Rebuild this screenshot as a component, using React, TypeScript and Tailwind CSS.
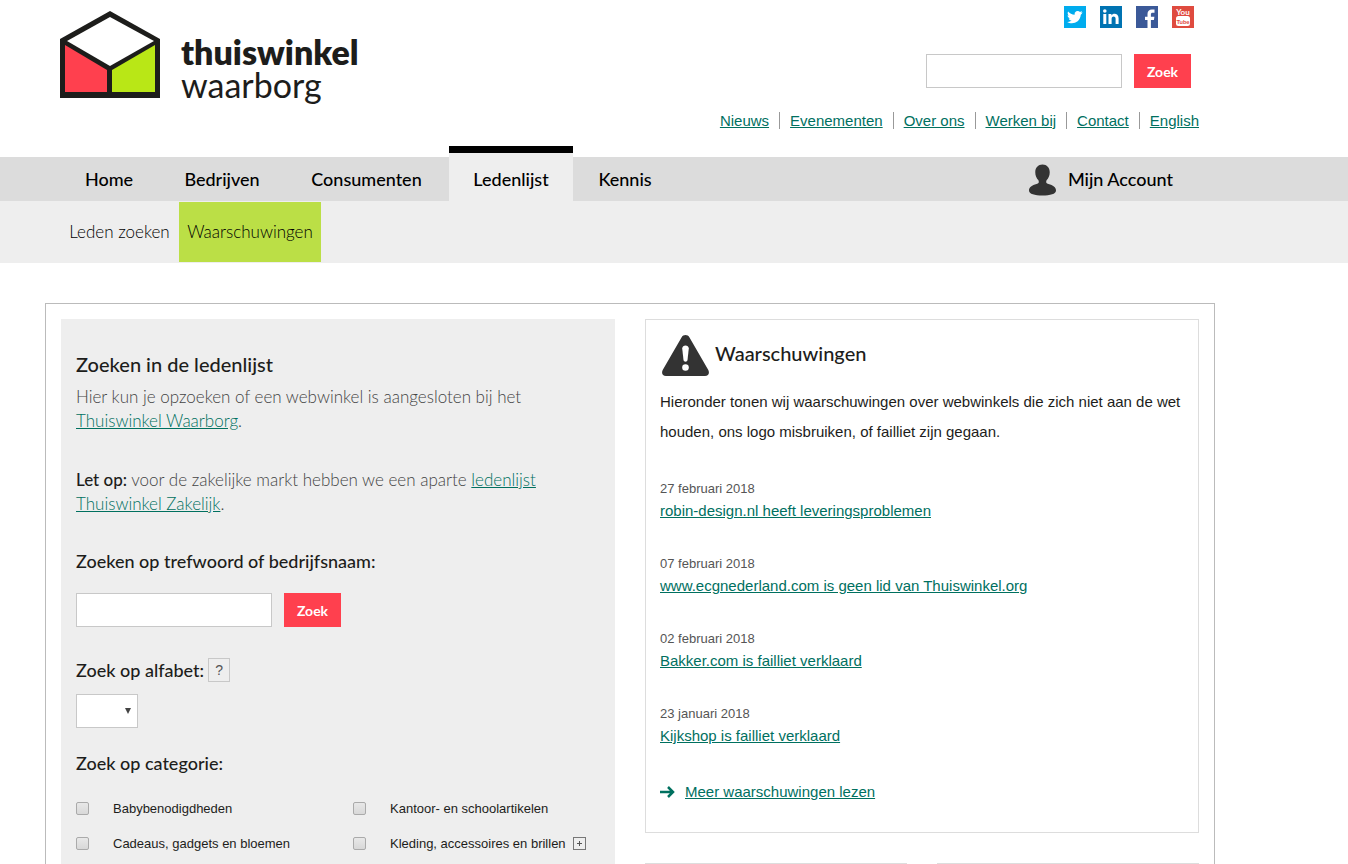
import React from 'react';

const topLinks = ['Nieuws', 'Evenementen', 'Over ons', 'Werken bij', 'Contact', 'English'];

const tabs = [
    { label: 'Home', width: 'w-[98px]' },
    { label: 'Bedrijven', width: 'w-[124px]' },
    { label: 'Consumenten', width: 'w-[161px]' },
    { label: 'Ledenlijst', width: 'w-[124px]', active: true },
    { label: 'Kennis', width: 'w-[100px]' },
];

const warnings = [
    { date: '27 februari 2018', title: 'robin-design.nl heeft leveringsproblemen' },
    { date: '07 februari 2018', title: 'www.ecgnederland.com is geen lid van Thuiswinkel.org' },
    { date: '02 februari 2018', title: 'Bakker.com is failliet verklaard' },
    { date: '23 januari 2018', title: 'Kijkshop is failliet verklaard' },
];

const categories = [
    { label: 'Babybenodigdheden' },
    { label: 'Kantoor- en schoolartikelen' },
    { label: 'Cadeaus, gadgets en bloemen' },
    { label: 'Kleding, accessoires en brillen', expandable: true },
];

const Logo: React.FC = () => (
    <a href="#" className="flex text-[#1d1d1b]" aria-label="Thuiswinkel Waarborg">
        <svg width="100" height="88" viewBox="0 0 100 88" className="shrink-0">
            <path d="M0 28 50 0 100 28V87H0Z" fill="#1d1d1b" />
            <path d="M50 6 94 30 50 55 7 30Z" fill="#fff" />
            <path d="M5 34 47 59V81H5Z" fill="#ff404e" />
            <path d="M95 34 52 59V81H95Z" fill="#b9e716" />
        </svg>
        <span className="ml-[21px] mt-6 flex flex-col font-['Lato',sans-serif] text-[34px] leading-[33px]">
            <span className="font-extrabold">thuiswinkel</span>
            <span>waarborg</span>
        </span>
    </a>
);

const SocialLinks: React.FC = () => (
    <div className="mr-[6px] flex gap-[14px]">
        <a href="#" aria-label="Twitter">
            <svg width="22" height="22" viewBox="0 0 22 22">
                <rect width="22" height="22" fill="#00acee" />
                <path d="M18.5 6.3c-.6.3-1.2.4-1.8.5.7-.4 1.1-1 1.3-1.7-.6.4-1.3.6-2 .8a3.2 3.2 0 0 0-5.4 2.9C8 8.600 5.700 7.400 4.100 5.400c-.9 1.500-.4 3.300.9 4.200-.5 0-1-.1-1.400-.4 0 1.600 1.100 2.900 2.500 3.200-.5.1-.9.1-1.400 0 .4 1.300 1.600 2.200 3 2.200a6.300 6.300 0 0 1-4.600 1.300c4.400 2.800 12.900 1.500 13.700-7.100.7-.5 1.300-1.200 1.700-2.500Z" fill="#fff" />
            </svg>
        </a>
        <a href="#" aria-label="LinkedIn">
            <svg width="22" height="22" viewBox="0 0 22 22">
                <rect width="22" height="22" fill="#0073b2" />
                <g fill="#fff">
                    <circle cx="4.8" cy="5" r="1.8" />
                    <rect x="3.3" y="8" width="3" height="10" />
                    <path d="M8.5 8h2.900v1.400c1.500-2.500 7.200-2.400 7.200 2.800V18h-3v-5.200c0-3-4-2.900-4 0V18H8.500Z" />
                </g>
            </svg>
        </a>
        <a href="#" aria-label="Facebook">
            <svg width="22" height="22" viewBox="0 0 22 22">
                <rect width="22" height="22" fill="#3b5998" />
                <path d="M11.500 22v-8H9v-3.300h2.500V8c0-3 1.700-4.600 4.400-4.600h2.600v3.300h-1.800c-1.300 0-1.800.6-1.800 1.700v2.300h3.500l-.5 3.300h-3v8Z" fill="#fff" />
            </svg>
        </a>
        <a href="#" aria-label="YouTube">
            <svg width="22" height="22" viewBox="0 0 22 22">
                <rect width="22" height="22" fill="#df4b3f" />
                <rect x="4" y="10" width="14" height="10" rx="2.5" fill="#fff" />
                <g fontFamily="Lato, sans-serif" fontWeight="700" textAnchor="middle">
                    <text x="11" y="9" fontSize="8" fill="#fff">You</text>
                    <text x="11" y="18" fontSize="6" fill="#df4b3f">Tube</text>
                </g>
            </svg>
        </a>
    </div>
);

const SearchForm: React.FC<{ label: string }> = ({ label }) => (
    <form className="flex gap-3" onSubmit={(e) => e.preventDefault()}>
        <input
            type="text"
            aria-label={label}
            className="h-[34px] w-[196px] border border-[#c8c8c8] bg-white px-2 text-sm"
        />
        <button
            type="submit"
            className="h-[34px] w-[57px] bg-[#ff404e] font-['Lato',sans-serif] text-[14px] font-bold text-white"
        >
            Zoek
        </button>
    </form>
);

const Header: React.FC = () => (
    <header>
        <div className="ml-[45px] flex h-[157px] max-w-[1170px] justify-between px-[15px]">
            <div className="pt-[11px]">
                <Logo />
            </div>
            <div className="flex flex-col items-end pt-[6px]">
                <SocialLinks />
                <div className="mr-[9px] mt-[26px]">
                    <SearchForm label="Zoeken op de site" />
                </div>
                <nav className="mr-px mt-6 flex text-[15px] leading-[17px] text-[#00705f]">
                    {topLinks.map((link, index) => (
                        <span key={link} className={index > 0 ? 'ml-[10px] border-l border-[#999] pl-[10px]' : ''}>
                            <a href="#" className="underline">{link}</a>
                        </span>
                    ))}
                </nav>
            </div>
        </div>

        <div className="bg-[#dcdcdc]">
            <div className="ml-[45px] flex h-11 max-w-[1170px] justify-between px-[15px] font-['Lato',sans-serif] text-[18px] font-medium text-black">
                <nav className="flex gap-[2px]">
                    {tabs.map((tab) => (
                        <a
                            key={tab.label}
                            href="#"
                            className={
                                tab.active
                                    ? `-mt-[11px] flex items-center justify-center border-t-[7px] border-black bg-[#eee] pt-1 ${tab.width}`
                                    : `flex items-center justify-center ${tab.width}`
                            }
                        >
                            {tab.label}
                        </a>
                    ))}
                </nav>
                <a href="#" className="mr-[27px] flex items-center gap-3">
                    <svg width="27" height="32" viewBox="0 0 28 32" fill="#333" className="mt-[2px]">
                        <path d="M14 0c4.500 0 7.500 3.300 7.500 8 0 3.500-1.300 6.500-3.300 8.300-.9 2.200-.3 3.200 2 3.800 4.600 1.100 7.800 3.300 7.800 6.700C28 30.500 22 32 14 32S0 30.500 0 26.800c0-3.400 3.200-5.600 7.800-6.700 2.300-.6 2.900-1.600 2-3.800C7.800 14.500 6.500 11.500 6.500 8c0-4.700 3-8 7.500-8Z" />
                    </svg>
                    Mijn Account
                </a>
            </div>
        </div>

        <div className="bg-[#eee]">
            <nav className="ml-[45px] flex h-[62px] max-w-[1170px] px-[15px] py-px font-['Lato',sans-serif] text-[17px] font-light text-black">
                <a href="#" className="flex w-[119px] items-center justify-center">Leden zoeken</a>
                <a href="#" className="flex w-[142px] items-center justify-center bg-[#bbdf46]">Waarschuwingen</a>
            </nav>
        </div>
    </header>
);

const SearchPanel: React.FC = () => (
    <section className="bg-[#eee] px-[15px] pt-[31px] text-[#1d1d1b]">
        <div className="font-['Lato',sans-serif]">
            <h1 className="text-[20px] font-medium leading-7">Zoeken in de ledenlijst</h1>
            <p className="mt-[7px] text-[17px] font-light leading-6 text-[#444]">
                Hier kun je opzoeken of een webwinkel is aangesloten bij het
                <br />
                <a href="#" className="text-[#00705f] underline">Thuiswinkel Waarborg</a>.
            </p>
            <p className="mt-[35px] text-[17px] font-light leading-6 text-[#444]">
                <strong className="font-medium text-[#1d1d1b]">Let op:</strong> voor de zakelijke markt hebben we een aparte{' '}
                <a href="#" className="text-[#00705f] underline">
                    ledenlijst
                    <br />
                    Thuiswinkel Zakelijk
                </a>.
            </p>
            <h2 className="mt-[31px] text-[18px] font-medium leading-7">Zoeken op trefwoord of bedrijfsnaam:</h2>
        </div>
        <div className="mt-[18px]">
            <SearchForm label="Zoeken op trefwoord of bedrijfsnaam" />
        </div>
        <div className="mt-[29px] flex items-center gap-1">
            <label htmlFor="alfabet" className="font-['Lato',sans-serif] text-[18px] font-medium leading-7">
                Zoek op alfabet:
            </label>
            <button type="button" className="h-6 w-[22px] border border-[#c8c8c8] text-[14px] text-[#555]">?</button>
        </div>
        <div className="mt-[10px] grid w-[62px]">
            <select
                id="alfabet"
                className="col-start-1 row-start-1 h-[34px] appearance-none border border-[#c8c8c8] bg-white px-2 text-sm"
            >
                <option value=""></option>
                <option value="a">A</option>
                <option value="b">B</option>
            </select>
            <svg width="6" height="6" viewBox="0 0 6 6" className="pointer-events-none col-start-1 row-start-1 mr-[7px] self-center justify-self-end">
                <path d="M0 0h6L3 6Z" fill="#444" />
            </svg>
        </div>
        <h2 className="mt-[21px] font-['Lato',sans-serif] text-[18px] font-medium leading-7">Zoek op categorie:</h2>
        <div className="mt-[14px] grid grid-cols-2 gap-x-[30px]">
            {categories.map((category) => (
                <div key={category.label} className="flex h-[35px] items-center text-[13px]">
                    <label className="flex items-center gap-6">
                        <input
                            type="checkbox"
                            className="h-[13px] w-[13px] appearance-none rounded-[2px] border border-[#aaa] bg-linear-to-b from-[#e8e8e8] to-[#d8d8d8]"
                        />
                        {category.label}
                    </label>
                    {category.expandable && (
                        <button type="button" aria-label="Uitklappen" className="ml-[7px] border border-[#777]">
                            <svg width="11" height="11" viewBox="0 0 11 11">
                                <path d="M5.5 3v5M3 5.5h5" stroke="#555" />
                            </svg>
                        </button>
                    )}
                </div>
            ))}
        </div>
    </section>
);

const WarningsPanel: React.FC = () => (
    <section className="border border-[#ddd] px-[14px] pb-7 pt-[15px] text-[#1d1d1b]">
        <div className="flex gap-[6px]">
            <svg width="47" height="41" viewBox="0 0 47 41" className="ml-[2px] shrink-0">
                <path d="M19.500 2.500C21.300-.7 25.700-.7 27.500 2.500L46.300 35c1.500 3 .2 6-3.300 6H4c-3.500 0-4.800-3-3.300-6Z" fill="#333" />
                <path d="M20.200 13.500c0-4 6.600-4 6.600 0L25.500 25c-.3 2.200-3.700 2.200-4 0Z" fill="#fff" />
                <circle cx="23.5" cy="32.5" r="3.3" fill="#fff" />
            </svg>
            <h2 className="mt-1 font-['Lato',sans-serif] text-[20px] font-medium leading-7">Waarschuwingen</h2>
        </div>
        <p className="mt-[11px] text-[15px] leading-[30px]">
            Hieronder tonen wij waarschuwingen over webwinkels die zich niet aan de wet houden, ons logo misbruiken, of failliet zijn gegaan.
        </p>
        <ul className="mt-[31px] space-y-[30px]">
            {warnings.map((warning) => (
                <li key={warning.title}>
                    <p className="text-[13px] leading-[21px] text-[#555]">{warning.date}</p>
                    <a href="#" className="block text-[15px] leading-6 text-[#00705f] underline">{warning.title}</a>
                </li>
            ))}
        </ul>
        <a href="#" className="mt-8 flex items-center gap-[10px] text-[15px] leading-6 text-[#00705f]">
            <svg width="15" height="12" viewBox="0 0 15 12" fill="none" stroke="#00705f" strokeWidth="2.5">
                <path d="M0 6h13M8 1l5 5-5 5" />
            </svg>
            <span className="underline">Meer waarschuwingen lezen</span>
        </a>
    </section>
);

const App: React.FC = () => {
    return (
        <div className="flex min-h-screen flex-col bg-white font-['Liberation_Sans',Arial,sans-serif]">
            <Header />
            <main className="ml-[45px] mt-10 grid max-w-[1170px] flex-1 grid-cols-2 gap-[30px] border border-b-0 border-[#bbb] px-[15px] pt-[15px]">
                <SearchPanel />
                <div>
                    <WarningsPanel />
                    <div className="mt-[30px] grid grid-cols-2 gap-[30px]">
                        <div className="border-t border-[#ddd]" />
                        <div className="border-t border-[#ddd]" />
                    </div>
                </div>
            </main>
        </div>
    );
};

export default App;
